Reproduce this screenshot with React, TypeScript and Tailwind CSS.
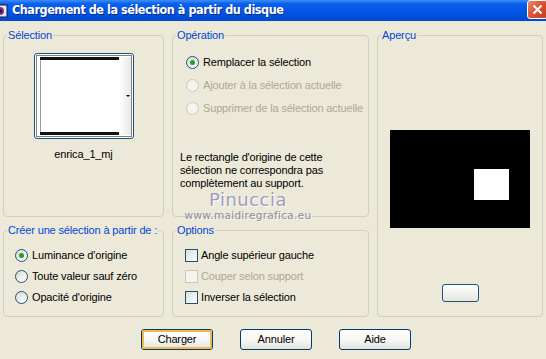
import React from "react";

const font = "font-['Liberation_Sans',Arial,sans-serif]";

function Radio({ checked, disabled, label }: { checked?: boolean; disabled?: boolean; label: string }) {
  return (
    <div className="flex items-center h-full">
      <span
        className={
          disabled
            ? "relative w-[13px] h-[13px] rounded-full border border-[#cac8bb] bg-[#f4f3ee] shrink-0"
            : "relative w-[13px] h-[13px] rounded-full border border-[#1c5180] bg-[linear-gradient(135deg,#dcdcd5,#ffffff)] shrink-0"
        }
      >
        {checked && <span className="absolute left-[3px] top-[3px] w-[5px] h-[5px] rounded-full bg-[#21a121]" />}
      </span>
      <span className={disabled ? "ml-[4px] text-[#aca899]" : "ml-[4px] text-black"}>{label}</span>
    </div>
  );
}

function Check({ disabled, label }: { disabled?: boolean; label: string }) {
  return (
    <div className="flex items-center h-full">
      <span
        className={
          disabled
            ? "w-[13px] h-[13px] border border-[#cac8bb] bg-[#f4f3ee] shrink-0"
            : "w-[13px] h-[13px] border border-[#1c5180] bg-[linear-gradient(135deg,#dcdcd5,#ffffff)] shrink-0"
        }
      />
      <span className={disabled ? "ml-[3px] text-[#aca899]" : "ml-[3px] text-black"}>{label}</span>
    </div>
  );
}

function Group({ title, className, children }: { title: string; className?: string; children: React.ReactNode }) {
  return (
    <fieldset className={`border border-[#d0d0bf] rounded-[4px] min-w-0 ${className ?? ""}`}>
      <legend className="ml-[3px] px-[1px] leading-[14px] text-[#0046d5]">{title}</legend>
      {children}
    </fieldset>
  );
}

function XpButton({ label, def }: { label: string; def?: boolean }) {
  return (
    <button
      className="w-[72px] h-[21px] rounded-[3px] border border-[#003c74] bg-[linear-gradient(180deg,#ffffff_0%,#f4f4f0_60%,#e3e2da_100%)] p-0 text-black"
    >
      <span
        className={
          def
            ? "flex items-center justify-center w-full h-full rounded-[2px] border-2 border-[#f6b846]"
            : "flex items-center justify-center w-full h-full"
        }
      >
        {label}
      </span>
    </button>
  );
}

export default function App() {
  return (
    <div className={`relative w-[546px] h-[359px] overflow-hidden bg-[#ece9d8] text-[11px] tracking-[-0.15px] ${font}`}>
      {/* Title bar */}
      <div className="flex items-center h-[21px] bg-[linear-gradient(180deg,#3d8ef6_0%,#0a60ea_18%,#0055e5_60%,#0049d2_100%)] overflow-hidden">
        <svg width="16" height="16" viewBox="0 0 16 16" className="-ml-[8px] shrink-0">
          <rect x="1" y="2" width="14" height="12" fill="#e8e4f4" stroke="#1a1a40" />
          <circle cx="8" cy="8" r="4" fill="#8b2d8f" />
          <circle cx="8" cy="8" r="2" fill="#1a1a1a" />
        </svg>
        <span className="ml-[4px] text-white font-bold text-[12.5px] tracking-[-0.45px] font-['DejaVu_Sans_Condensed','Liberation_Sans',sans-serif] [text-shadow:1px_1px_0_#0a2a8a]">
          Chargement de la sélection à partir du disque
        </span>
        <div className="ml-auto -mr-[2px] mt-[-2px] w-[21px] h-[19px] shrink-0 rounded-[3px] border border-white bg-[linear-gradient(135deg,#e98a6f,#d9512e_50%,#c4401f)] flex items-center justify-center">
          <svg width="11" height="11" viewBox="0 0 11 11">
            <path d="M1.5 1.5 L9.5 9.5 M9.5 1.5 L1.5 9.5" stroke="white" strokeWidth="2" />
          </svg>
        </div>
      </div>

      {/* Body */}
      <div className="pt-[7px] px-[3px]">
        <div className="grid grid-cols-[161px_197px_166px] grid-rows-[189px_94px] gap-x-[8px] gap-y-[6px]">
          <Group title="Sélection">
            <div className="flex flex-col items-center pt-[11px]">
              <div className="w-[100px] h-[86px] rounded-[3px] border border-[#1c5180] bg-white">
                <svg width="98" height="84" viewBox="0 0 98 84">
                  <defs>
                    <linearGradient id="side" x1="0" x2="1" y1="0" y2="0">
                      <stop offset="0" stopColor="#ffffff" />
                      <stop offset="1" stopColor="#e8e8e4" />
                    </linearGradient>
                  </defs>
                  <rect x="84" y="3" width="12" height="78" fill="url(#side)" />
                  <rect x="1.5" y="1.5" width="95" height="81" fill="none" stroke="#000" strokeDasharray="1 1" />
                  <rect x="5" y="3" width="79" height="3" fill="#111" />
                  <rect x="5" y="78" width="79" height="3" fill="#111" />
                  <rect x="5" y="6" width="1" height="72" fill="#9a9a9a" />
                  <path d="M91 41 L95 41 L93 43 Z" fill="#000" />
                </svg>
              </div>
              <div className="mt-[8px] leading-[14px]">enrica_1_mj</div>
            </div>
          </Group>

          <Group title="Opération">
            <div className="pt-[9px] pl-[13px]">
              <div className="h-[22px]">
                <Radio checked label="Remplacer la sélection" />
              </div>
              <div className="h-[24px]">
                <Radio disabled label="Ajouter à la sélection actuelle" />
              </div>
              <div className="h-[22px]">
                <Radio disabled label="Supprimer de la sélection actuelle" />
              </div>
            </div>
            <p className="mt-[32px] pl-[7px] leading-[13px]">
              Le rectangle d'origine de cette
              <br />
              sélection ne correspondra pas
              <br />
              complètement au support.
            </p>
          </Group>

          <Group title="Aperçu" className="row-span-2">
            <div className="flex flex-col items-center pt-[88px]">
              <div className="w-[140px] h-[98px] bg-black pl-[84px] pt-[39px]">
                <div className="w-[35px] h-[31px] bg-white" />
              </div>
              <div className="mt-[56px] w-[37px] h-[18px] rounded-[3px] border border-[#1c5180] bg-[linear-gradient(180deg,#ffffff,#e6e5de)]" />
            </div>
          </Group>

          <Group title="Créer une sélection à partir de :">
            <div className="pt-[8px] pl-[11px]">
              <div className="h-[21px]">
                <Radio checked label="Luminance d'origine" />
              </div>
              <div className="h-[21px]">
                <Radio label="Toute valeur sauf zéro" />
              </div>
              <div className="h-[21px]">
                <Radio label="Opacité d'origine" />
              </div>
            </div>
          </Group>

          <Group title="Options">
            <div className="pt-[8px] pl-[12px]">
              <div className="h-[21px]">
                <Check label="Angle supérieur gauche" />
              </div>
              <div className="h-[21px]">
                <Check disabled label="Couper selon support" />
              </div>
              <div className="h-[21px]">
                <Check label="Inverser la sélection" />
              </div>
            </div>
          </Group>
        </div>

        <div className="flex justify-center gap-[27px] mt-[12px] pl-[6px]">
          <XpButton label="Charger" def />
          <XpButton label="Annuler" />
          <XpButton label="Aide" />
        </div>
      </div>

      {/* Watermark */}
      <div className="absolute left-[186px] top-[190px] flex flex-col items-center w-[124px] pointer-events-none font-['DejaVu_Sans',sans-serif] tracking-[0.5px]">
        <span className="text-[18px] leading-[19px] text-[#a19dbf] [text-shadow:1px_1px_0_#ffffff]">Pinuccia</span>
        <span className="text-[10.5px] leading-[13px] text-[#8c8a9b] [text-shadow:1px_1px_0_#f8f8f8] tracking-[0.3px]">www.maidiregrafica.eu</span>
      </div>
    </div>
  );
}
